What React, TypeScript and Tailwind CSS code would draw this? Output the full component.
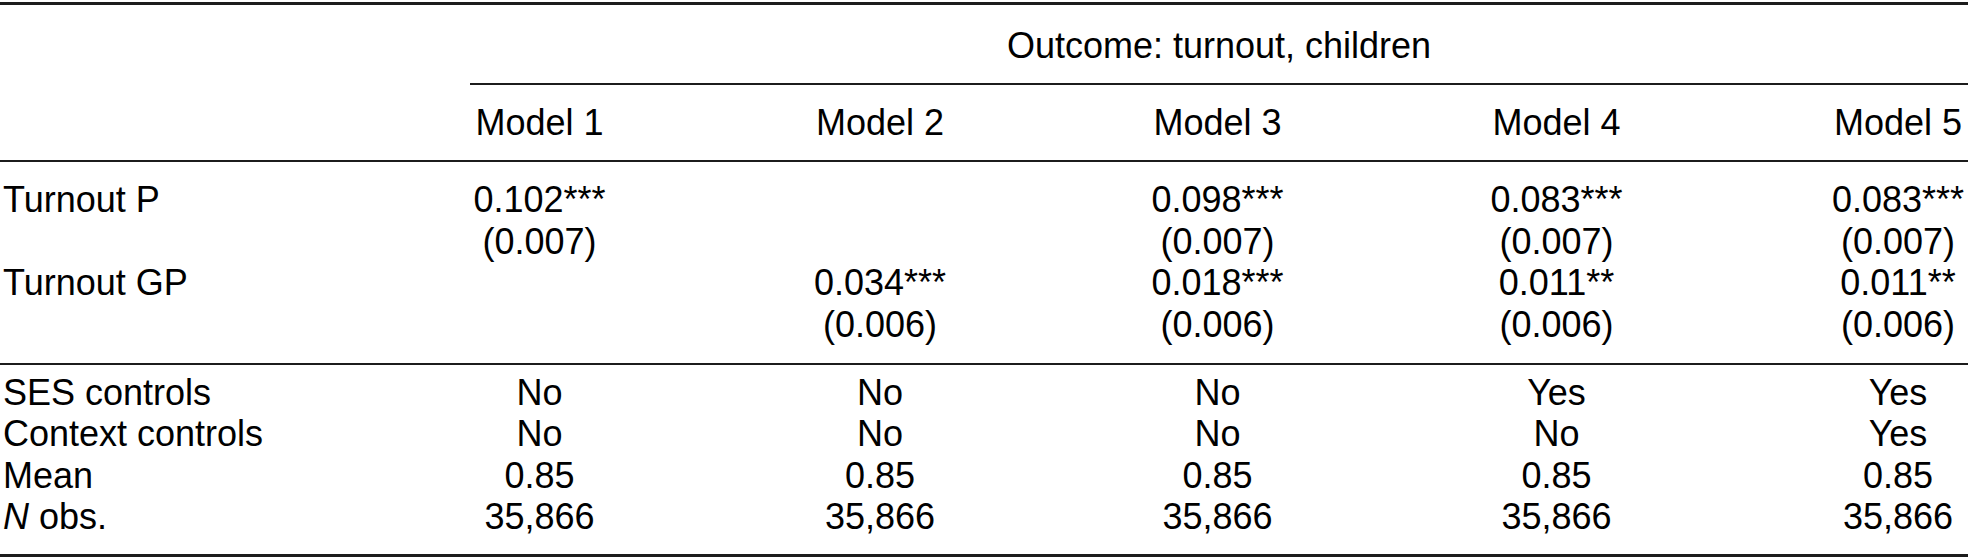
import React from 'react';

// Regression table: turnout of children, five model specifications.
type Cell = { v?: string; stars?: string };

const cols = 'grid grid-cols-[367px_345px_336px_339px_339px_242px]';
const cellBase = 'text-center whitespace-nowrap';
const lastCell = 'text-center whitespace-nowrap pl-[102px]';

const models = ['Model 1', 'Model 2', 'Model 3', 'Model 4', 'Model 5'];

const coefRows: { label: string; cells: Cell[] }[] = [
    {
        label: 'Turnout P',
        cells: [
            { v: '0.102', stars: '***' },
            {},
            { v: '0.098', stars: '***' },
            { v: '0.083', stars: '***' },
            { v: '0.083', stars: '***' },
        ],
    },
    {
        label: '',
        cells: [{ v: '(0.007)' }, {}, { v: '(0.007)' }, { v: '(0.007)' }, { v: '(0.007)' }],
    },
    {
        label: 'Turnout GP',
        cells: [
            {},
            { v: '0.034', stars: '***' },
            { v: '0.018', stars: '***' },
            { v: '0.011', stars: '**' },
            { v: '0.011', stars: '**' },
        ],
    },
    {
        label: '',
        cells: [{}, { v: '(0.006)' }, { v: '(0.006)' }, { v: '(0.006)' }, { v: '(0.006)' }],
    },
];

const statRows: { label: React.ReactNode; cells: string[] }[] = [
    { label: 'SES controls', cells: ['No', 'No', 'No', 'Yes', 'Yes'] },
    { label: 'Context controls', cells: ['No', 'No', 'No', 'No', 'Yes'] },
    { label: 'Mean', cells: ['0.85', '0.85', '0.85', '0.85', '0.85'] },
    {
        label: (
            <>
                <i>N</i> obs.
            </>
        ),
        cells: ['35,866', '35,866', '35,866', '35,866', '35,866'],
    },
];

function Value({ cell }: { cell: Cell }) {
    if (!cell.v) return null;
    return (
        <>
            {cell.v}
            {cell.stars && <span>{cell.stars}</span>}
        </>
    );
}

export default function App() {
    return (
        <div className="w-[1968px] h-[560px] bg-white text-black text-[36px] leading-[41.6px] font-['Liberation_Sans',Arial,sans-serif] overflow-hidden">
            <div className="mt-[2px] border-t-[3px] border-[#1c1c1c]">
                {/* spanning header */}
                <div className="flex">
                    <div className="w-[470px] shrink-0" />
                    <div className="flex-1 text-center pt-[20px] pb-[16px] border-b-2 border-[#1c1c1c]">
                        Outcome: turnout, children
                    </div>
                </div>

                {/* model header */}
                <div className={`${cols} pt-[17px] pb-[17px] border-b-2 border-[#1c1c1c]`}>
                    <div />
                    {models.map((m, i) => (
                        <div key={m} className={i === 4 ? lastCell : cellBase}>
                            {m}
                        </div>
                    ))}
                </div>

                {/* coefficients */}
                <div className="pt-[17px] pb-[17px] border-b-2 border-[#1c1c1c]">
                    {coefRows.map((row, r) => (
                        <div key={r} className={cols}>
                            <div className="pl-[3px] whitespace-nowrap">{row.label}</div>
                            {row.cells.map((c, i) => (
                                <div key={i} className={i === 4 ? lastCell : cellBase}>
                                    <Value cell={c} />
                                </div>
                            ))}
                        </div>
                    ))}
                </div>

                {/* controls and sample */}
                <div className="pt-[7px] pb-[16px] border-b-[3px] border-[#1c1c1c]">
                    {statRows.map((row, r) => (
                        <div key={r} className={cols}>
                            <div className="pl-[3px] whitespace-nowrap">{row.label}</div>
                            {row.cells.map((c, i) => (
                                <div key={i} className={i === 4 ? lastCell : cellBase}>
                                    {c}
                                </div>
                            ))}
                        </div>
                    ))}
                </div>
            </div>
        </div>
    );
}
